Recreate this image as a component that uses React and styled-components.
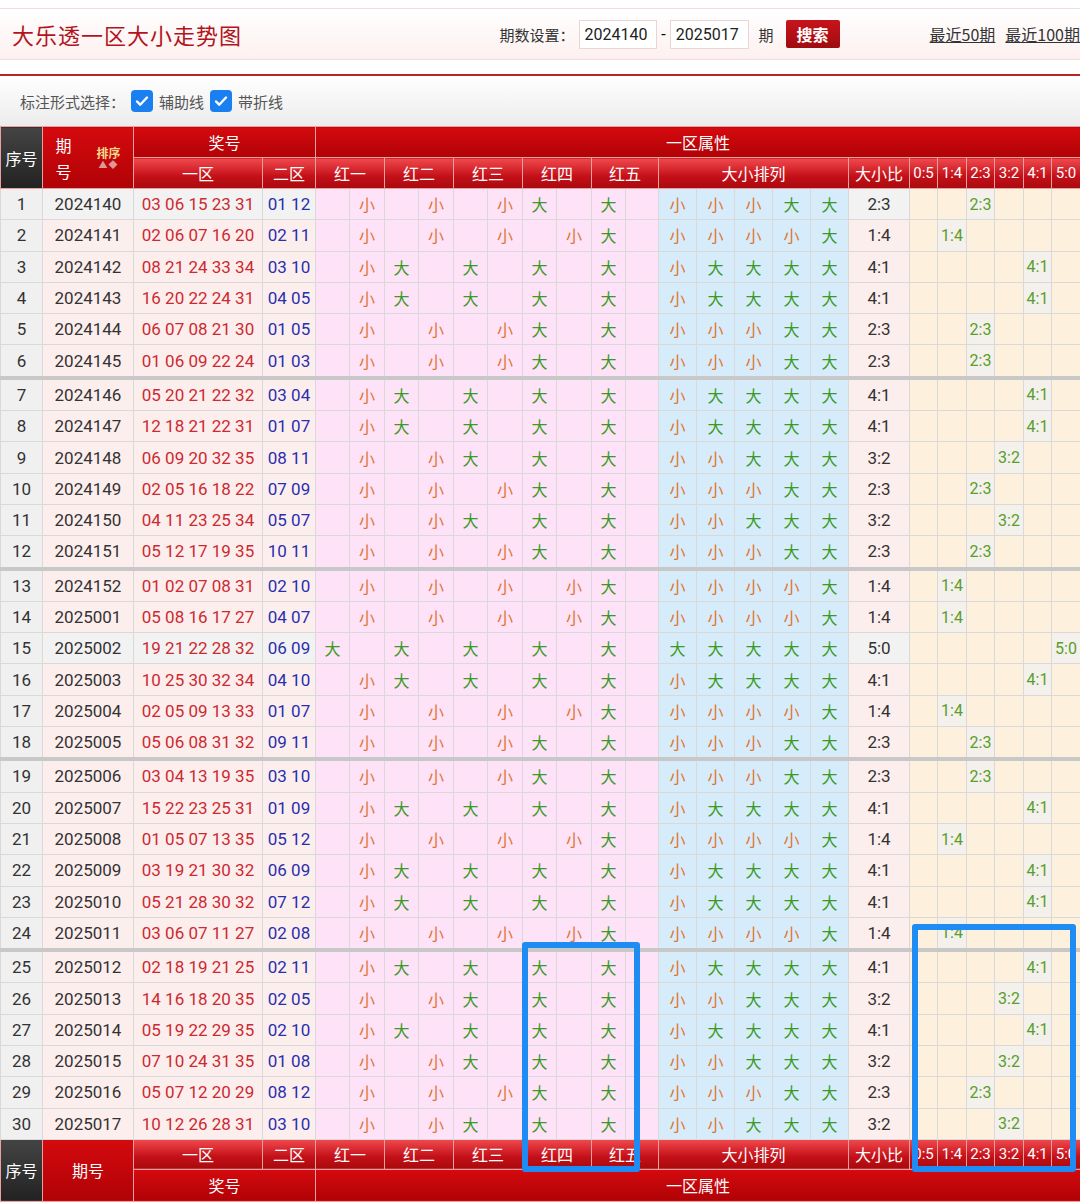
import React from 'react';
import styled, { createGlobalStyle } from 'styled-components';

const Global = createGlobalStyle`
  body { margin: 0; background: #fff; font-family: Roboto, "Noto Sans CJK SC", sans-serif; }
`;

const Page = styled.div`
  position: relative;
  width: 1080px;
  height: 1204px;
  overflow: hidden;
`;

const TopBar = styled.div`
  margin-top: 8px;
  height: 50px;
  display: flex;
  align-items: center;
  padding-left: 12px;
  background: linear-gradient(#fff, #fdf0f0);
  border-top: 1px solid #f0dede;
  border-bottom: 1px solid #f0dede;
  white-space: nowrap;
`;

const Title = styled.h1`
  margin: 0;
  font: 400 22px "Noto Sans CJK SC", serif;
  color: #b3141c;
  letter-spacing: 1px;
  width: 523px;
`;

const Label = styled.span`
  font: 15px "Noto Sans CJK SC", sans-serif;
  color: #333;
`;

const Input = styled.div`
  width: 84px;
  height: 29px;
  border: 1px solid #ecd4d4;
  background: #fff;
  font: 16px Roboto, sans-serif;
  color: #222;
  display: flex;
  align-items: center;
  padding-left: 5px;
  box-sizing: border-box;
  margin: 0 4px;
`;

const SearchBtn = styled.div`
  margin-left: 12px;
  width: 58px;
  height: 28px;
  background: linear-gradient(#c8141c, #9e0c10);
  color: #fff;
  font: 700 16px "Noto Sans CJK SC", sans-serif;
  display: flex;
  align-items: center;
  justify-content: center;
  border-radius: 2px;
`;

const Link = styled.span`
  margin-left: ${p => p.$ml}px;
  font: 16px "Noto Sans CJK SC", sans-serif;
  color: #333;
  text-decoration: underline;
`;

const RedLine = styled.div`
  margin-top: 14px;
  height: 2px;
  background: #b8262c;
`;

const Options = styled.div`
  height: 50px;
  display: flex;
  align-items: center;
  gap: 6px;
  padding-left: 20px;
  background: linear-gradient(#fff, #ececec);
  font: 15px "Noto Sans CJK SC", sans-serif;
  color: #555;
`;

const Check = styled.span`
  width: 22px;
  height: 22px;
  border-radius: 4px;
  background: #1a7ff0;
  display: inline-flex;
  align-items: center;
  justify-content: center;
`;

const Table = styled.table`
  border-collapse: collapse;
  table-layout: fixed;
  width: 1080px;
  font-family: Roboto, "Noto Sans CJK SC", sans-serif;
`;

const Th = styled.th`
  height: ${p => p.$h || 30}px;
  padding: 0;
  font: 400 ${p => p.$fs || 16}px "Noto Sans CJK SC", sans-serif;
  color: #fff;
  border: 1px solid #e9a0a0;
  white-space: nowrap;
  overflow: hidden;
  background: ${p => p.$dark ? 'linear-gradient(#444, #222)'
    : p.$sub ? 'linear-gradient(#f04a4e, #c41018 60%, #a80a0e)'
    : 'linear-gradient(#d40a0e, #b00206)'};
`;

const Td = styled.td`
  height: 30.3px;
  padding: 0;
  text-align: center;
  border: 1px solid #d9d9d9;
  font-size: ${p => p.$fs || 17}px;
  white-space: nowrap;
  overflow: hidden;
  color: ${p => p.$c || '#333'};
  background: ${p => p.$bg || 'transparent'};
  border-bottom: ${p => p.$sep ? '4px solid #c8c8c8' : '1px solid #d9d9d9'};
`;

const BigSmall = styled.span`
  font: 16px "Noto Sans CJK SC", sans-serif;
  color: ${p => p.$big ? '#3b9a24' : '#e0742e'};
`;

const Marker = styled.div`
  position: absolute;
  border: 6px solid #1e8cf2;
  border-radius: 3px;
  pointer-events: none;
`;

const raw = `2024140 03 06 15 23 31|01 12
2024141 02 06 07 16 20|02 11
2024142 08 21 24 33 34|03 10
2024143 16 20 22 24 31|04 05
2024144 06 07 08 21 30|01 05
2024145 01 06 09 22 24|01 03
2024146 05 20 21 22 32|03 04
2024147 12 18 21 22 31|01 07
2024148 06 09 20 32 35|08 11
2024149 02 05 16 18 22|07 09
2024150 04 11 23 25 34|05 07
2024151 05 12 17 19 35|10 11
2024152 01 02 07 08 31|02 10
2025001 05 08 16 17 27|04 07
2025002 19 21 22 28 32|06 09
2025003 10 25 30 32 34|04 10
2025004 02 05 09 13 33|01 07
2025005 05 06 08 31 32|09 11
2025006 03 04 13 19 35|03 10
2025007 15 22 23 25 31|01 09
2025008 01 05 07 13 35|05 12
2025009 03 19 21 30 32|06 09
2025010 05 21 28 30 32|07 12
2025011 03 06 07 11 27|02 08
2025012 02 18 19 21 25|02 11
2025013 14 16 18 20 35|02 05
2025014 05 19 22 29 35|02 10
2025015 07 10 24 31 35|01 08
2025016 05 07 12 20 29|08 12
2025017 10 12 26 28 31|03 10`;

const rows = raw.split('\n').map(l => {
  const [a, blue] = l.split('|');
  const [issue, ...reds] = a.split(' ');
  return { issue, reds, blue, bigs: reds.map(n => Number(n) >= 18) };
});

const subW = [34, 35, 34, 35, 34, 35, 34, 35, 34, 33];
const ratioW = [28, 29, 28, 29, 28, 29];
const ratios = ['0:5', '1:4', '2:3', '3:2', '4:1', '5:0'];
const reds = ['红一', '红二', '红三', '红四', '红五'];

const CheckIcon = () => (
  <svg width="16" height="16" viewBox="0 0 16 16"><path d="M3 8.5l3.2 3.2L13 4.5" stroke="#fff" strokeWidth="2.4" fill="none" strokeLinecap="round" strokeLinejoin="round" /></svg>
);

const SortCell = styled.div`
  display: flex;
  align-items: center;
  justify-content: space-around;
  font: 16px/26px "Noto Sans CJK SC", sans-serif;
`;

const SortTag = styled.div`
  display: flex;
  flex-direction: column;
  align-items: center;
  font: 700 12px/14px "Noto Sans CJK SC", sans-serif;
  color: #f8d890;
`;

const Arrows = styled.span`
  font-size: 9px;
  line-height: 10px;
  color: #d99;
  letter-spacing: 1px;
`;

const SubHeaders = ({ h }) => (
  <>
    <Th $sub $h={h}>一区</Th>
    <Th $sub $h={h}>二区</Th>
    {reds.map(r => <Th $sub $h={h} colSpan={2} key={r}>{r}</Th>)}
    <Th $sub $h={h} colSpan={5}>大小排列</Th>
    <Th $sub $h={h}>大小比</Th>
    {ratios.map(r => <Th $sub $h={h} $fs={15} key={r} style={{ fontFamily: 'Roboto' }}>{r}</Th>)}
  </>
);

export default function App() {
  return (
    <Page>
      <Global />
      <TopBar>
        <Title>大乐透一区大小走势图</Title>
        <Label>期数设置：</Label>
        <Input>2024140</Input>-<Input>2025017</Input>
        <Label style={{ marginLeft: 6 }}>期</Label>
        <SearchBtn>搜索</SearchBtn>
        <Link $ml={90}>最近50期</Link>
        <Link $ml={10}>最近100期</Link>
      </TopBar>
      <RedLine />
      <Options>
        标注形式选择：<Check><CheckIcon /></Check>辅助线<Check><CheckIcon /></Check>带折线
      </Options>
      <Table>
        <colgroup>
          <col style={{ width: 42 }} /><col style={{ width: 91 }} /><col style={{ width: 129 }} /><col style={{ width: 53 }} />
          {subW.map((w, i) => <col key={'s' + i} style={{ width: w }} />)}
          {[38, 38, 38, 38, 38].map((w, i) => <col key={'p' + i} style={{ width: w }} />)}
          <col style={{ width: 61 }} />
          {ratioW.map((w, i) => <col key={'r' + i} style={{ width: w }} />)}
        </colgroup>
        <thead>
          <tr>
            <Th $dark rowSpan={2}>序号</Th>
            <Th rowSpan={2}>
              <SortCell><span>期<br />号</span><SortTag>排序<Arrows>▲◆</Arrows></SortTag></SortCell>
            </Th>
            <Th colSpan={2}>奖号</Th>
            <Th colSpan={22}>一区属性</Th>
          </tr>
          <tr><SubHeaders /></tr>
        </thead>
        <tbody>
          {rows.map((r, i) => {
            const big = r.bigs.filter(Boolean).length;
            const sep = i % 6 === 5 && i < 29;
            const gray = i === 0 || i === 14;
            const rowBg = gray ? '#f2f2f2' : '#fdeeee';
            return (
              <tr key={r.issue}>
                <Td $sep={sep} $bg="#f0f0f0">{i + 1}</Td>
                <Td $sep={sep} $bg={rowBg}>{r.issue}</Td>
                <Td $sep={sep} $bg={rowBg} $c="#cc2a30">{r.reds.join(' ')}</Td>
                <Td $sep={sep} $bg={rowBg} $c="#2a2fae">{r.blue}</Td>
                {r.bigs.map((b, k) => (
                  <React.Fragment key={k}>
                    <Td $sep={sep} $bg="#fde2f8">{b && <BigSmall $big>大</BigSmall>}</Td>
                    <Td $sep={sep} $bg="#fde2f8">{!b && <BigSmall>小</BigSmall>}</Td>
                  </React.Fragment>
                ))}
                {r.bigs.map((b, k) => (
                  <Td $sep={sep} $bg="#d6ecfb" key={'p' + k}><BigSmall $big={b}>{b ? '大' : '小'}</BigSmall></Td>
                ))}
                <Td $sep={sep} $bg={rowBg}>{big}:{5 - big}</Td>
                {ratios.map((t, k) => (
                  <Td $sep={sep} key={t} $fs={16} $c="#5a9e2a" $bg={k === big ? '#f4f0ec' : '#fdf0dc'}>{k === big ? t : ''}</Td>
                ))}
              </tr>
            );
          })}
        </tbody>
        <tfoot>
          <tr>
            <Th $dark rowSpan={2}>序号</Th>
            <Th rowSpan={2}>期号</Th>
            <SubHeaders h={29} />
          </tr>
          <tr>
            <Th colSpan={2} $h={31}>奖号</Th>
            <Th colSpan={22} $h={31}>一区属性</Th>
          </tr>
        </tfoot>
      </Table>
      <Marker style={{ left: 522, top: 942, width: 106, height: 218 }} />
      <Marker style={{ left: 912, top: 924, width: 152, height: 236 }} />
    </Page>
  );
}
